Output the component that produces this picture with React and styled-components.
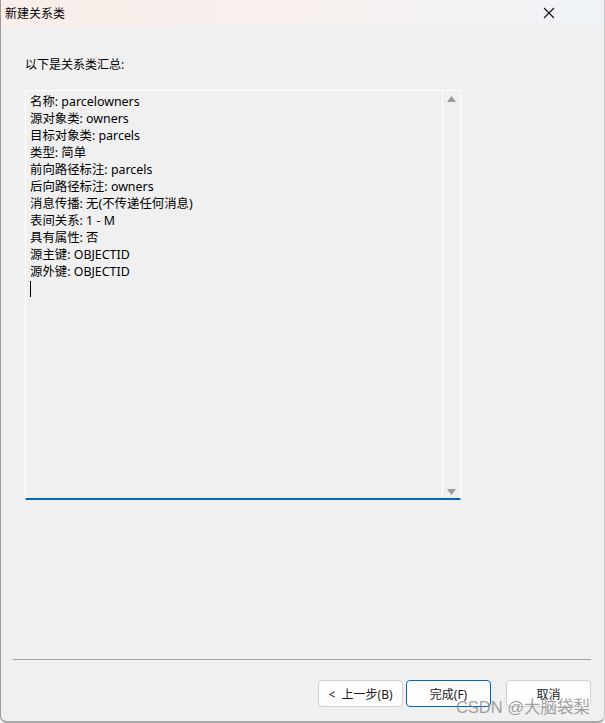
import React from 'react'
import styled, { createGlobalStyle } from 'styled-components'

const Global = createGlobalStyle`
  html, body { margin: 0; padding: 0; background: #f0f0f0; }
  body { font-family: "Noto Sans", "Noto Sans CJK SC", sans-serif; }
`

const Window = styled.div`
  width: 603px;
  height: 721px;
  background: #f0f0f0;
  border-left: 1px solid #9a9a9a;
  border-right: 1px solid #c8c8c8;
  border-bottom: 2px solid #a8a8a8;
  border-bottom-left-radius: 7px;
  border-bottom-right-radius: 7px;
  display: flex;
  flex-direction: column;
  position: relative;
  overflow: hidden;
`

const TitleBar = styled.div`
  height: 26px;
  display: flex;
  align-items: center;
  justify-content: space-between;
  padding: 0 0 0 4px;
  background: linear-gradient(90deg, #f9eee9 0%, #f6f0ee 55%, #eff3f7 100%);
  font-size: 12px;
  color: #000;
`

const Close = styled.div`
  width: 48px;
  height: 26px;
  display: flex;
  align-items: center;
  justify-content: center;
  margin-right: 31px;
`

const Body = styled.div`
  flex: 1;
  display: flex;
  flex-direction: column;
  padding: 0 0 0 24px;
`

const Label = styled.div`
  font-size: 12px;
  margin-top: 30px;
  height: 17px;
  line-height: 17px;
`

const TextArea = styled.div`
  margin-top: 17px;
  width: 436px;
  height: 410px;
  box-sizing: border-box;
  border: 1px solid #ffffff;
  border-bottom: 2px solid #0067c0;
  display: flex;
`

const Content = styled.div`
  flex: 1;
  padding: 2px 0 0 4px;
  border-right: 1px solid #ffffff;
`

const Line = styled.div`
  font-size: 12.4px;
  line-height: 17px;
  height: 17px;
  color: #000;
  white-space: nowrap;
`

const Caret = styled.div`
  width: 1px;
  height: 16px;
  background: #000;
  margin-top: 1px;
`

const Scroll = styled.div`
  width: 17px;
  display: flex;
  flex-direction: column;
  justify-content: space-between;
  align-items: center;
  padding: 5px 0 3px;
`

const Footer = styled.div`
  margin-top: auto;
  padding: 0 13px 14px 12px;
  margin-left: -24px;
`

const Separator = styled.div`
  height: 1px;
  background: #a0a0a0;
  margin-bottom: 20px;
`

const Buttons = styled.div`
  display: flex;
  justify-content: flex-end;
  gap: 3px;
`

const Button = styled.div`
  width: 85px;
  height: 27px;
  box-sizing: border-box;
  border: 1px solid ${p => (p.$primary ? '#0067c0' : '#d0d0d0')};
  border-radius: 4px;
  background: #fdfdfd;
  font-size: 12px;
  display: flex;
  align-items: center;
  justify-content: center;
  margin-left: ${p => p.$gap || 0}px;
  color: #1a1a1a;
  white-space: pre;
`

const Watermark = styled.div`
  position: absolute;
  right: 14px;
  bottom: 3px;
  font-size: 16.5px;
  color: rgba(130, 130, 130, 0.75);
  font-family: "Liberation Sans", "Noto Sans CJK SC", sans-serif;
`

const lines = [
  '名称: parcelowners',
  '源对象类: owners',
  '目标对象类: parcels',
  '类型: 简单',
  '前向路径标注: parcels',
  '后向路径标注: owners',
  '消息传播: 无(不传递任何消息)',
  '表间关系: 1 - M',
  '具有属性: 否',
  '源主键: OBJECTID',
  '源外键: OBJECTID',
]

export default function App() {
  return (
    <>
      <Global />
      <Window>
        <TitleBar>
          <span>新建关系类</span>
          <Close>
            <svg width="12" height="12" viewBox="0 0 12 12">
              <path d="M1 1 L11 11 M11 1 L1 11" stroke="#111" strokeWidth="1.1" />
            </svg>
          </Close>
        </TitleBar>
        <Body>
          <Label>以下是关系类汇总:</Label>
          <TextArea>
            <Content>
              {lines.map(l => (
                <Line key={l}>{l}</Line>
              ))}
              <Caret />
            </Content>
            <Scroll>
              <svg width="9" height="6" viewBox="0 0 9 6">
                <path d="M4.5 0 L9 6 L0 6 Z" fill="#9a9a9a" />
              </svg>
              <svg width="9" height="6" viewBox="0 0 9 6">
                <path d="M0 0 L9 0 L4.5 6 Z" fill="#9a9a9a" />
              </svg>
            </Scroll>
          </TextArea>
          <Footer>
            <Separator />
            <Buttons>
              <Button>{'<  上一步(B)'}</Button>
              <Button $primary>完成(F)</Button>
              <Button $gap={12}>取消</Button>
            </Buttons>
          </Footer>
        </Body>
        <Watermark>CSDN @大脑袋梨</Watermark>
      </Window>
    </>
  )
}
